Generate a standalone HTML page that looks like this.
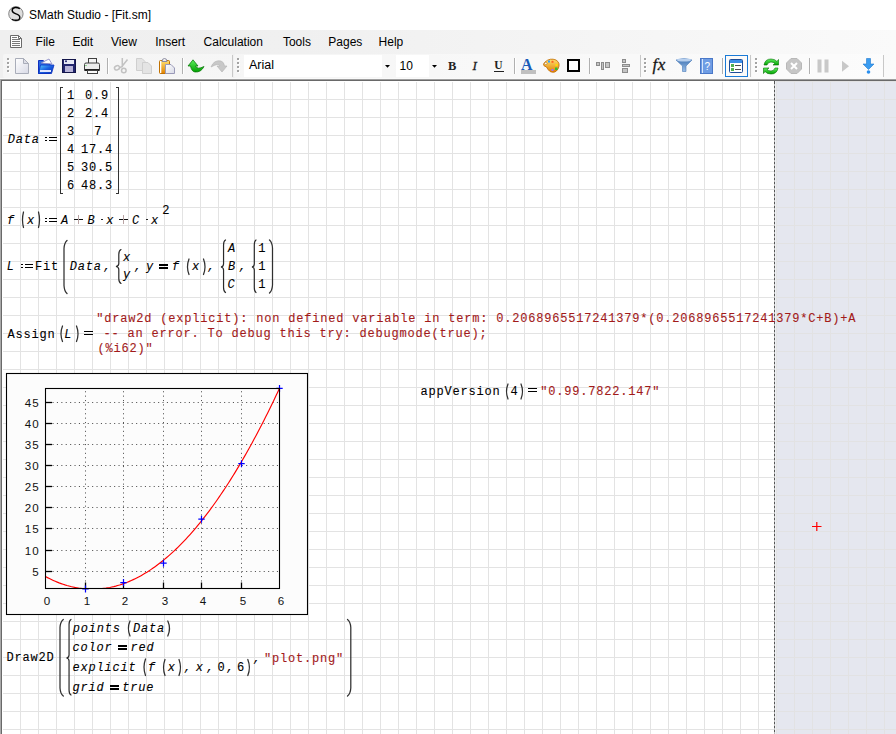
<!DOCTYPE html><html><head><meta charset="utf-8"><style>
*{margin:0;padding:0;box-sizing:border-box}
html,body{width:896px;height:734px;overflow:hidden;background:#fff;position:relative;font-family:"Liberation Sans",sans-serif}
div,span,svg{position:absolute}
.mi{font-size:12px;color:#000;line-height:14px;white-space:pre}
.m{font-family:"Liberation Mono",monospace;font-size:12px;letter-spacing:0.8px;white-space:pre;line-height:15px;color:#000;-webkit-text-stroke:0.1px}
.i{font-style:italic}
.red{color:#b3191e}
</style></head><body>
<div style="left:0;top:0;width:896px;height:30px;background:#fff"></div>
<div class="mi" style="left:29px;top:8px;font-size:12px">SMath Studio - [Fit.sm]</div>
<svg style="left:0;top:0" width="40" height="30" viewBox="0 0 40 30"><circle cx="15.9" cy="13.8" r="7.2" fill="#dedede" stroke="#7a7a7a" stroke-width="0.9"/><path d="M19.8 8.8 Q18 7.4 15.2 7.5 Q12 7.8 12.2 10.6 Q12.5 12.8 16 13.8 Q19.8 14.8 19.8 17.4 Q19.7 20.3 15.8 20.3 Q13.2 20.3 12 19.3" fill="none" stroke="#000" stroke-width="1.4"/></svg>
<div style="left:0;top:30px;width:896px;height:23px;background:linear-gradient(to right,#efefef 0,#f0f0f0 300px,#fafafa 896px)"></div>
<div class="mi" style="left:35.6px;top:35px">File</div>
<div class="mi" style="left:72.4px;top:35px">Edit</div>
<div class="mi" style="left:111px;top:35px">View</div>
<div class="mi" style="left:155.2px;top:35px">Insert</div>
<div class="mi" style="left:203.6px;top:35px">Calculation</div>
<div class="mi" style="left:282.9px;top:35px">Tools</div>
<div class="mi" style="left:328.3px;top:35px">Pages</div>
<div class="mi" style="left:378.6px;top:35px">Help</div>
<svg style="left:0;top:30px" width="30" height="23" viewBox="0 0 30 23"><path d="M10.5 5.5 H18.5 L21.5 8.5 V17.5 H10.5 Z" fill="#fff" stroke="#6a6a6a" stroke-width="1"/><path d="M18.5 5.5 V8.5 H21.5" fill="none" stroke="#6a6a6a"/><path d="M12 7.5 H17 M12 9.5 H20 M12 11.5 H20 M12 13.5 H20 M12 15.5 H20" stroke="#7a7a7a" stroke-width="1"/></svg>
<div style="left:0;top:53px;width:896px;height:26px;background:linear-gradient(to right,#efefef 0,#f0f0f0 300px,#fafafa 896px)"></div>
<svg style="left:0;top:0" width="896" height="80" viewBox="0 0 896 80"><defs><linearGradient id="pg" x1="0" y1="0" x2="1" y2="1"><stop offset="0" stop-color="#ffffff"/><stop offset="1" stop-color="#d8dae6"/></linearGradient><linearGradient id="fold" x1="0" y1="0" x2="1" y2="1"><stop offset="0" stop-color="#5ad0ff"/><stop offset="0.5" stop-color="#1a5fe0"/><stop offset="1" stop-color="#0a2fb0"/></linearGradient><linearGradient id="grn" x1="0" y1="0" x2="0" y2="1"><stop offset="0" stop-color="#60f060"/><stop offset="1" stop-color="#00a000"/></linearGradient><linearGradient id="org" x1="0" y1="0" x2="0" y2="1"><stop offset="0" stop-color="#ffe070"/><stop offset="1" stop-color="#e08000"/></linearGradient><linearGradient id="fun" x1="0" y1="0" x2="0" y2="1"><stop offset="0" stop-color="#3b6fb0"/><stop offset="1" stop-color="#9cc0e8"/></linearGradient></defs><rect x="3" y="54" width="230" height="24" rx="2" fill="#ffffff" fill-opacity="0.4"/><line x1="232.5" y1="55" x2="232.5" y2="77" stroke="#c8c8c8"/><rect x="234" y="54" width="407" height="24" rx="2" fill="#ffffff" fill-opacity="0.4"/><line x1="640.5" y1="55" x2="640.5" y2="77" stroke="#c8c8c8"/><rect x="641" y="54" width="110" height="24" rx="2" fill="#ffffff" fill-opacity="0.4"/><line x1="750.5" y1="55" x2="750.5" y2="77" stroke="#c8c8c8"/><rect x="752" y="54" width="132" height="24" rx="2" fill="#ffffff" fill-opacity="0.4"/><line x1="883.5" y1="55" x2="883.5" y2="77" stroke="#c8c8c8"/><rect x="8" y="59" width="2" height="2" fill="#fff"/><rect x="7" y="58" width="2" height="2" fill="#a3a3a3"/><rect x="8" y="63" width="2" height="2" fill="#fff"/><rect x="7" y="62" width="2" height="2" fill="#a3a3a3"/><rect x="8" y="67" width="2" height="2" fill="#fff"/><rect x="7" y="66" width="2" height="2" fill="#a3a3a3"/><rect x="8" y="71" width="2" height="2" fill="#fff"/><rect x="7" y="70" width="2" height="2" fill="#a3a3a3"/><rect x="238" y="59" width="2" height="2" fill="#fff"/><rect x="237" y="58" width="2" height="2" fill="#a3a3a3"/><rect x="238" y="63" width="2" height="2" fill="#fff"/><rect x="237" y="62" width="2" height="2" fill="#a3a3a3"/><rect x="238" y="67" width="2" height="2" fill="#fff"/><rect x="237" y="66" width="2" height="2" fill="#a3a3a3"/><rect x="238" y="71" width="2" height="2" fill="#fff"/><rect x="237" y="70" width="2" height="2" fill="#a3a3a3"/><rect x="645" y="59" width="2" height="2" fill="#fff"/><rect x="644" y="58" width="2" height="2" fill="#a3a3a3"/><rect x="645" y="63" width="2" height="2" fill="#fff"/><rect x="644" y="62" width="2" height="2" fill="#a3a3a3"/><rect x="645" y="67" width="2" height="2" fill="#fff"/><rect x="644" y="66" width="2" height="2" fill="#a3a3a3"/><rect x="645" y="71" width="2" height="2" fill="#fff"/><rect x="644" y="70" width="2" height="2" fill="#a3a3a3"/><rect x="756" y="59" width="2" height="2" fill="#fff"/><rect x="755" y="58" width="2" height="2" fill="#a3a3a3"/><rect x="756" y="63" width="2" height="2" fill="#fff"/><rect x="755" y="62" width="2" height="2" fill="#a3a3a3"/><rect x="756" y="67" width="2" height="2" fill="#fff"/><rect x="755" y="66" width="2" height="2" fill="#a3a3a3"/><rect x="756" y="71" width="2" height="2" fill="#fff"/><rect x="755" y="70" width="2" height="2" fill="#a3a3a3"/><path d="M15.5 58.5 H23.5 L28.5 63.5 V73.5 H15.5 Z" fill="url(#pg)" stroke="#a9adb9"/><path d="M23.5 58.5 L23.5 63.5 H28.5 Z" fill="#dcdde6" stroke="#a9adb9"/><path d="M38.5 60.5 H43 L45 62 H50 V73.5 H38.5 Z" fill="#2a6ae0" stroke="#1030c0"/><path d="M41 63 L49 59 L52 64 Z" fill="#fff" stroke="#8080c0" stroke-width="0.8"/><path d="M40.5 65 H54 L51.5 73.5 H38.5 Z" fill="url(#fold)" stroke="#0a30c0" stroke-width="0.8"/><rect x="40" y="70" width="11" height="2" fill="#dfe6ff"/><rect x="62.5" y="59.5" width="13" height="13" fill="#23266e" stroke="#14164a"/><rect x="64" y="60" width="10" height="4" fill="#e8eaf6"/><circle cx="66" cy="61.3" r="1" fill="#23266e"/><rect x="65" y="66" width="8" height="6" fill="#b8b4d8"/><rect x="88.5" y="58.5" width="8" height="5" fill="#f4f4f4" stroke="#404040"/><path d="M84.5 64.5 Q84.5 63 86 63 H98 Q99.5 63 99.5 64.5 V70.5 H84.5 Z" fill="#ececec" stroke="#404040"/><rect x="85" y="69" width="14" height="2" fill="#202020"/><rect x="87.5" y="70.5" width="10" height="3" fill="#fafafa" stroke="#404040"/><rect x="85.5" y="65" width="1" height="1" fill="#30c030"/><rect x="107" y="58" width="1" height="16" fill="#b0b0b0"/><rect x="108" y="58" width="1" height="16" fill="#fff"/><g stroke="#c2c2c2" stroke-width="1.5" fill="none"><ellipse cx="117" cy="67.8" rx="2.6" ry="2" transform="rotate(-25 117 67.8)"/><circle cx="123.8" cy="70.5" r="2.3"/><path d="M122.3 58 V66.5 L120 67.5 M127.5 59.5 L121.5 67"/></g><path d="M136.5 58.5 H142 L145 61.5 V70.5 H136.5 Z" fill="#e4e4e4" stroke="#cfcfcf"/><path d="M142.5 62.5 H148 L151.5 66 V73.5 H142.5 Z" fill="#e4e4e4" stroke="#cfcfcf"/><rect x="159.5" y="60.5" width="10" height="13" rx="1" fill="url(#org)" stroke="#c07000"/><rect x="160" y="61" width="1.3" height="12" fill="#fff"/><path d="M162 61.5 Q162 58.5 164.5 58.5 Q167 58.5 167 61.5 Z" fill="#f0f0f0" stroke="#8a8aa0"/><path d="M165.5 64.5 H171 L174.5 68 V73.5 H165.5 Z" fill="url(#pg)" stroke="#9a9ab8"/><rect x="182" y="58" width="1" height="16" fill="#b0b0b0"/><rect x="183" y="58" width="1" height="16" fill="#fff"/><path d="M188 66 L193 59.8 L198 66 H195.5 Q197 70 204 66.5 Q201 72.5 195 72 Q191.5 71.5 190.5 66 Z" fill="url(#grn)" stroke="#007000" stroke-width="0.7"/><path d="M211 67 Q214 59.5 221 61 Q224 62 224.5 66 H227 L222 72 L217 66 H220 Q219 62.5 211 67 Z" fill="#c8c8c8" stroke="#b8b8b8" stroke-width="0.7"/><rect x="244" y="55" width="150" height="22" fill="#fff"/><rect x="382" y="55" width="12" height="22" fill="#f7f7f7"/><path d="M385 65 H390 L387.5 67.8 Z" fill="#000"/><rect x="396" y="55" width="45" height="22" fill="#fff"/><rect x="429" y="55" width="12" height="22" fill="#f7f7f7"/><path d="M432 65 H437 L434.5 67.8 Z" fill="#000"/><text x="249" y="69" font-family="Liberation Sans" font-size="12.5" fill="#000">Arial</text><text x="399.5" y="70" font-family="Liberation Sans" font-size="12" fill="#000">10</text><text x="448" y="70" font-family="Liberation Serif" font-weight="bold" font-size="12.5" fill="#222">B</text><text x="472.5" y="70" font-family="Liberation Serif" font-style="italic" font-size="13" fill="#222" stroke="#222" stroke-width="0.3">I</text><text x="494.3" y="69" font-family="Liberation Serif" font-weight="bold" font-size="11.5" fill="#222">U</text><rect x="494" y="71" width="10" height="1" fill="#222"/><rect x="514" y="58" width="1" height="16" fill="#b0b0b0"/><rect x="515" y="58" width="1" height="16" fill="#fff"/><text x="521" y="70" font-family="Liberation Serif" font-weight="bold" font-size="16" fill="#1a5cb8">A</text><rect x="521" y="70" width="15" height="4" fill="#c0c0c0"/><path d="M545 62 Q550 57.5 556 60 Q561 63 558 69 Q555 74 550 71.5 Q548 70 546.5 67 Q543 66 543.5 64 Z" fill="url(#org)" stroke="#c06a00" stroke-width="0.8"/><circle cx="545.8" cy="63.5" r="1.2" fill="#fff" stroke="#a06000" stroke-width="0.5"/><rect x="548" y="60.5" width="2" height="2" fill="#30a0ff"/><rect x="551.5" y="60.8" width="2" height="2" fill="#ff6020"/><rect x="555.5" y="64" width="2" height="2" fill="#ffe000"/><rect x="555" y="67.5" width="2.5" height="2.5" fill="#30c030"/><rect x="551.5" y="69" width="2" height="2" fill="#a070ff"/><rect x="568" y="60" width="11" height="11" fill="#fff" stroke="#000" stroke-width="2"/><rect x="589" y="58" width="1" height="16" fill="#b0b0b0"/><rect x="590" y="58" width="1" height="16" fill="#fff"/><g fill="#c4c4c4" stroke="#8c8c8c" stroke-width="1"><rect x="596.5" y="62.5" width="3" height="3"/><rect x="601.5" y="62.5" width="2" height="7"/><rect x="605.5" y="62.5" width="4" height="5"/><rect x="622.5" y="59.5" width="3" height="3"/><rect x="622.5" y="64.5" width="7" height="2"/><rect x="622.5" y="68.5" width="5" height="4"/></g><text x="652.5" y="70" font-family="Liberation Serif" font-style="italic" font-size="17" letter-spacing="0.6" fill="#151515" stroke="#151515" stroke-width="0.3">fx</text><path d="M676 60 Q684 57 692 60 L686 66 V71.5 H682.5 V66 Z" fill="url(#fun)" stroke="#4a7ab8" stroke-width="0.6"/><ellipse cx="684" cy="60" rx="7.5" ry="1.6" fill="#b8d0ee"/><rect x="700.5" y="58.5" width="12" height="15" fill="#6f9de4" stroke="#4a78c8"/><rect x="702" y="59" width="1" height="14" fill="#d8e6fa"/><text x="704.5" y="70" font-family="Liberation Sans" font-size="10" fill="#fff">?</text><rect x="722" y="58" width="1" height="16" fill="#b0b0b0"/><rect x="723" y="58" width="1" height="16" fill="#fff"/><rect x="725.5" y="55.5" width="22" height="21" fill="#fbfaf9" stroke="#1a7ad6"/><rect x="729.5" y="59.5" width="13" height="13" rx="1" fill="#fff" stroke="#1c4d98"/><rect x="730" y="60" width="12" height="3" fill="#3c8ee8"/><rect x="731" y="64" width="3" height="3" fill="#50b050"/><rect x="731" y="68" width="3" height="3" fill="#50b050"/><rect x="735" y="65" width="6" height="1" fill="#505050"/><rect x="735" y="69" width="6" height="1" fill="#505050"/><path d="M764 65 Q765 59 771 59 Q775 59 777 61.5 L778.5 59.5 V65 H773 L775 63.5 Q773.5 62 771 62 Q768 62 767 65 Z" fill="url(#grn)" stroke="#007000" stroke-width="0.6"/><path d="M778 68 Q777 74 771 74 Q767 74 765 71.5 L763.5 73.5 V68 H769 L767 69.5 Q768.5 71 771 71 Q774 71 775 68 Z" fill="url(#grn)" stroke="#007000" stroke-width="0.6"/><path d="M791 58.5 H797 L801.5 63 V69 L797 73.5 H791 L786.5 69 V63 Z" fill="#c6c6c6" stroke="#b8b8b8"/><path d="M791 63 L797 69 M797 63 L791 69" stroke="#fff" stroke-width="2"/><rect x="809" y="58" width="1" height="16" fill="#b0b0b0"/><rect x="810" y="58" width="1" height="16" fill="#fff"/><rect x="817.5" y="59.5" width="4" height="13" fill="#c8c8c8"/><rect x="824.5" y="59.5" width="4" height="13" fill="#c8c8c8"/><path d="M842 60.8 L849 66.2 L842 71.7 Z" fill="#c8c8c8"/><path d="M866.5 58.5 H870.5 V64 H874 L868.5 69.5 L863 64 H866.5 Z" fill="#3a9cf0" stroke="#1e78d0" stroke-width="0.6"/><circle cx="868.5" cy="72" r="1.8" fill="#2a90f0"/></svg>
<div style="left:0;top:78px;width:896px;height:1px;background:#fafafa"></div>
<div style="left:0;top:79px;width:896px;height:1px;background:#a0a0a0"></div>
<div style="left:0;top:80px;width:896px;height:1px;background:#696969"></div>
<div style="left:0;top:79px;width:1px;height:655px;background:#a9a9a9"></div>
<div style="left:1px;top:80px;width:1px;height:654px;background:#696969"></div>
<div style="left:2px;top:81px;width:894px;height:653px;background:#fff"></div>
<div style="left:3px;top:82px;width:771px;height:652px;background-image:linear-gradient(to right,#e3e3e3 1px,transparent 1px),linear-gradient(to bottom,#e3e3e3 1px,transparent 1px);background-size:18px 18px;background-position:17px 17px"></div>
<div style="left:775px;top:81px;width:121px;height:653px;background-color:#e5e7ef;background-image:linear-gradient(to right,#e2e2e3 1px,transparent 1px),linear-gradient(to bottom,#e2e2e3 1px,transparent 1px);background-size:18px 18px;background-position:1px 18px"></div>
<div style="left:775px;top:81px;width:1px;height:653px;background:#eef0f4"></div>
<div style="left:774px;top:81px;width:1px;height:653px;background:repeating-linear-gradient(to bottom,#555 0,#555 2px,#bbb 2px,#bbb 4px);background-position:0 1px"></div>
<svg style="left:0;top:0" width="896" height="734" viewBox="0 0 896 734"><rect x="6.5" y="373.5" width="301" height="241" fill="#fcfcfc" stroke="#000" stroke-width="1.1"/><line x1="85.5" y1="581.5" x2="85.5" y2="389.5" stroke="#555" stroke-width="1" stroke-dasharray="1.1 3.3"/><line x1="123.5" y1="581.5" x2="123.5" y2="389.5" stroke="#555" stroke-width="1" stroke-dasharray="1.1 3.3"/><line x1="163.5" y1="581.5" x2="163.5" y2="389.5" stroke="#555" stroke-width="1" stroke-dasharray="1.1 3.3"/><line x1="201.5" y1="581.5" x2="201.5" y2="389.5" stroke="#555" stroke-width="1" stroke-dasharray="1.1 3.3"/><line x1="241.5" y1="581.5" x2="241.5" y2="389.5" stroke="#555" stroke-width="1" stroke-dasharray="1.1 3.3"/><line x1="52.5" y1="402.5" x2="278.5" y2="402.5" stroke="#555" stroke-width="1" stroke-dasharray="1.1 3.3"/><line x1="52.5" y1="423.5" x2="278.5" y2="423.5" stroke="#555" stroke-width="1" stroke-dasharray="1.1 3.3"/><line x1="52.5" y1="444.5" x2="278.5" y2="444.5" stroke="#555" stroke-width="1" stroke-dasharray="1.1 3.3"/><line x1="52.5" y1="465.5" x2="278.5" y2="465.5" stroke="#555" stroke-width="1" stroke-dasharray="1.1 3.3"/><line x1="52.5" y1="486.5" x2="278.5" y2="486.5" stroke="#555" stroke-width="1" stroke-dasharray="1.1 3.3"/><line x1="52.5" y1="507.5" x2="278.5" y2="507.5" stroke="#555" stroke-width="1" stroke-dasharray="1.1 3.3"/><line x1="52.5" y1="528.5" x2="278.5" y2="528.5" stroke="#555" stroke-width="1" stroke-dasharray="1.1 3.3"/><line x1="52.5" y1="550.5" x2="278.5" y2="550.5" stroke="#555" stroke-width="1" stroke-dasharray="1.1 3.3"/><line x1="52.5" y1="571.5" x2="278.5" y2="571.5" stroke="#555" stroke-width="1" stroke-dasharray="1.1 3.3"/><line x1="85.5" y1="588.5" x2="85.5" y2="582.5" stroke="#000" stroke-width="1.3"/><line x1="123.5" y1="588.5" x2="123.5" y2="582.5" stroke="#000" stroke-width="1.3"/><line x1="163.5" y1="588.5" x2="163.5" y2="582.5" stroke="#000" stroke-width="1.3"/><line x1="201.5" y1="588.5" x2="201.5" y2="582.5" stroke="#000" stroke-width="1.3"/><line x1="241.5" y1="588.5" x2="241.5" y2="582.5" stroke="#000" stroke-width="1.3"/><line x1="45.5" y1="402.5" x2="52.0" y2="402.5" stroke="#000" stroke-width="1.3"/><line x1="45.5" y1="423.5" x2="52.0" y2="423.5" stroke="#000" stroke-width="1.3"/><line x1="45.5" y1="444.5" x2="52.0" y2="444.5" stroke="#000" stroke-width="1.3"/><line x1="45.5" y1="465.5" x2="52.0" y2="465.5" stroke="#000" stroke-width="1.3"/><line x1="45.5" y1="486.5" x2="52.0" y2="486.5" stroke="#000" stroke-width="1.3"/><line x1="45.5" y1="507.5" x2="52.0" y2="507.5" stroke="#000" stroke-width="1.3"/><line x1="45.5" y1="528.5" x2="52.0" y2="528.5" stroke="#000" stroke-width="1.3"/><line x1="45.5" y1="550.5" x2="52.0" y2="550.5" stroke="#000" stroke-width="1.3"/><line x1="45.5" y1="571.5" x2="52.0" y2="571.5" stroke="#000" stroke-width="1.3"/><clipPath id="pc"><rect x="45" y="388" width="235" height="200.5"/></clipPath><polyline clip-path="url(#pc)" points="45.50,576.59 47.45,577.62 49.40,578.60 51.35,579.54 53.30,580.44 55.25,581.29 57.20,582.10 59.15,582.87 61.10,583.59 63.05,584.27 65.00,584.91 66.95,585.50 68.90,586.04 70.85,586.55 72.80,587.01 74.75,587.43 76.70,587.80 78.65,588.13 80.60,588.41 82.55,588.66 84.50,588.86 86.45,589.01 88.40,589.12 90.35,589.19 92.30,589.21 94.25,589.19 96.20,589.13 98.15,589.02 100.10,588.87 102.05,588.68 104.00,588.44 105.95,588.16 107.90,587.83 109.85,587.47 111.80,587.05 113.75,586.60 115.70,586.10 117.65,585.55 119.60,584.97 121.55,584.34 123.50,583.66 125.45,582.94 127.40,582.18 129.35,581.38 131.30,580.53 133.25,579.64 135.20,578.70 137.15,577.72 139.10,576.70 141.05,575.63 143.00,574.52 144.95,573.36 146.90,572.17 148.85,570.92 150.80,569.64 152.75,568.31 154.70,566.94 156.65,565.52 158.60,564.06 160.55,562.56 162.50,561.01 164.45,559.42 166.40,557.79 168.35,556.11 170.30,554.39 172.25,552.62 174.20,550.81 176.15,548.96 178.10,547.06 180.05,545.12 182.00,543.14 183.95,541.11 185.90,539.04 187.85,536.93 189.80,534.77 191.75,532.57 193.70,530.32 195.65,528.03 197.60,525.70 199.55,523.32 201.50,520.90 203.45,518.44 205.40,515.93 207.35,513.38 209.30,510.79 211.25,508.15 213.20,505.47 215.15,502.74 217.10,499.97 219.05,497.16 221.00,494.30 222.95,491.40 224.90,488.46 226.85,485.47 228.80,482.44 230.75,479.37 232.70,476.25 234.65,473.09 236.60,469.88 238.55,466.63 240.50,463.34 242.45,460.00 244.40,456.62 246.35,453.20 248.30,449.73 250.25,446.22 252.20,442.67 254.15,439.07 256.10,435.43 258.05,431.74 260.00,428.01 261.95,424.24 263.90,420.42 265.85,416.56 267.80,412.66 269.75,408.71 271.70,404.72 273.65,400.68 275.60,396.61 277.55,392.48 279.50,388.32" fill="none" stroke="#ff0000" stroke-width="1.15"/><path d="M82.3 589.0 H88.7 M85.5 585.5 V592.5" stroke="#0000ff" stroke-width="1.2"/><path d="M120.3 582.6 H126.7 M123.5 579.1 V586.1" stroke="#0000ff" stroke-width="1.2"/><path d="M160.3 563.2 H166.7 M163.5 559.7 V566.7" stroke="#0000ff" stroke-width="1.2"/><path d="M198.3 519.2 H204.7 M201.5 515.7 V522.7" stroke="#0000ff" stroke-width="1.2"/><path d="M238.3 463.7 H244.7 M241.5 460.2 V467.2" stroke="#0000ff" stroke-width="1.2"/><path d="M276.3 388.4 H282.7 M279.5 384.9 V391.9" stroke="#0000ff" stroke-width="1.2"/><rect x="45.5" y="388.5" width="234.0" height="200.0" fill="none" stroke="#000" stroke-width="1.1"/><text x="39.6" y="406.6" text-anchor="end" font-family="Liberation Sans" font-size="11.6" letter-spacing="1" fill="#111">45</text><text x="39.6" y="427.6" text-anchor="end" font-family="Liberation Sans" font-size="11.6" letter-spacing="1" fill="#111">40</text><text x="39.6" y="448.6" text-anchor="end" font-family="Liberation Sans" font-size="11.6" letter-spacing="1" fill="#111">35</text><text x="39.6" y="469.6" text-anchor="end" font-family="Liberation Sans" font-size="11.6" letter-spacing="1" fill="#111">30</text><text x="39.6" y="490.6" text-anchor="end" font-family="Liberation Sans" font-size="11.6" letter-spacing="1" fill="#111">25</text><text x="39.6" y="511.6" text-anchor="end" font-family="Liberation Sans" font-size="11.6" letter-spacing="1" fill="#111">20</text><text x="39.6" y="532.6" text-anchor="end" font-family="Liberation Sans" font-size="11.6" letter-spacing="1" fill="#111">15</text><text x="39.6" y="554.6" text-anchor="end" font-family="Liberation Sans" font-size="11.6" letter-spacing="1" fill="#111">10</text><text x="39.6" y="575.6" text-anchor="end" font-family="Liberation Sans" font-size="11.6" letter-spacing="1" fill="#111">5</text><text x="47.5" y="605" text-anchor="middle" font-family="Liberation Sans" font-size="11.6" letter-spacing="1" fill="#111">0</text><text x="87.5" y="605" text-anchor="middle" font-family="Liberation Sans" font-size="11.6" letter-spacing="1" fill="#111">1</text><text x="125.5" y="605" text-anchor="middle" font-family="Liberation Sans" font-size="11.6" letter-spacing="1" fill="#111">2</text><text x="165.5" y="605" text-anchor="middle" font-family="Liberation Sans" font-size="11.6" letter-spacing="1" fill="#111">3</text><text x="203.5" y="605" text-anchor="middle" font-family="Liberation Sans" font-size="11.6" letter-spacing="1" fill="#111">4</text><text x="243.5" y="605" text-anchor="middle" font-family="Liberation Sans" font-size="11.6" letter-spacing="1" fill="#111">5</text><text x="281.5" y="605" text-anchor="middle" font-family="Liberation Sans" font-size="11.6" letter-spacing="1" fill="#111">6</text></svg>
<div class="m i" style="left:7.8px;top:133px">Data</div><div style="left:45px;top:137px;width:2px;height:1px;background:#000"></div><div style="left:45px;top:140px;width:2px;height:1px;background:#000"></div><div style="left:49px;top:137px;width:8px;height:1px;background:#000"></div><div style="left:49px;top:140px;width:8px;height:1px;background:#000"></div><div style="left:60px;top:87px;width:1px;height:107px;background:#333"></div><div style="left:60px;top:87px;width:3px;height:1px;background:#333"></div><div style="left:60px;top:193px;width:3px;height:1px;background:#333"></div><div style="left:118px;top:87px;width:1px;height:107px;background:#333"></div><div style="left:116px;top:87px;width:3px;height:1px;background:#333"></div><div style="left:116px;top:193px;width:3px;height:1px;background:#333"></div><div class="m" style="left:66.9px;top:89px">1</div><div class="m" style="left:84.9px;top:89px">0.9</div><div class="m" style="left:66.9px;top:107px">2</div><div class="m" style="left:84.9px;top:107px">2.4</div><div class="m" style="left:66.9px;top:125px">3</div><div class="m" style="left:94.3px;top:125px">7</div><div class="m" style="left:66.9px;top:143px">4</div><div class="m" style="left:81px;top:143px">17.4</div><div class="m" style="left:66.9px;top:161px">5</div><div class="m" style="left:81px;top:161px">30.5</div><div class="m" style="left:66.9px;top:179px">6</div><div class="m" style="left:81px;top:179px">48.3</div><div class="m i" style="left:7px;top:214px">f</div><div class="m i" style="left:27px;top:214px">x</div><div style="left:45px;top:218px;width:2px;height:1px;background:#000"></div><div style="left:45px;top:221px;width:2px;height:1px;background:#000"></div><div style="left:49px;top:218px;width:8px;height:1px;background:#000"></div><div style="left:49px;top:221px;width:8px;height:1px;background:#000"></div><div class="m i" style="left:61px;top:214px">A</div><div style="left:74px;top:219px;width:9px;height:1px;background:#111"></div><div style="left:78px;top:215px;width:1px;height:9px;background:#b9a4a4"></div><div class="m i" style="left:87.5px;top:214px">B</div><div style="left:101px;top:219px;width:2px;height:1px;background:#222"></div><div class="m i" style="left:106.2px;top:214px">x</div><div style="left:119px;top:219px;width:9px;height:1px;background:#111"></div><div style="left:123px;top:215px;width:1px;height:9px;background:#b9a4a4"></div><div class="m i" style="left:132px;top:214px">C</div><div style="left:146px;top:219px;width:2px;height:1px;background:#222"></div><div class="m i" style="left:151px;top:214px">x</div><div class="m" style="left:162.3px;top:204px">2</div><div class="m i" style="left:6.8px;top:260px">L</div><div style="left:21px;top:264px;width:2px;height:1px;background:#000"></div><div style="left:21px;top:267px;width:2px;height:1px;background:#000"></div><div style="left:25px;top:264px;width:8px;height:1px;background:#000"></div><div style="left:25px;top:267px;width:8px;height:1px;background:#000"></div><div class="m" style="left:35px;top:260px">Fit</div><div class="m i" style="left:69.8px;top:260px">Data</div><div class="m i" style="left:103.6px;top:260px">,</div><div class="m i" style="left:123px;top:251px">x</div><div class="m i" style="left:123px;top:268px">y</div><div class="m i" style="left:134.3px;top:260px">,</div><div class="m i" style="left:146.1px;top:260px">y</div><div style="left:159px;top:264px;width:9px;height:2px;background:#000"></div><div style="left:159px;top:267px;width:9px;height:2px;background:#000"></div><div class="m i" style="left:171.9px;top:260px">f</div><div class="m i" style="left:191.9px;top:260px">x</div><div class="m i" style="left:207.6px;top:260px">,</div><div class="m i" style="left:228px;top:242px">A</div><div class="m i" style="left:228px;top:260px">B</div><div class="m i" style="left:227.5px;top:278px">C</div><div class="m i" style="left:239px;top:260px">,</div><div class="m" style="left:258.2px;top:242px">1</div><div class="m" style="left:258.2px;top:260px">1</div><div class="m" style="left:258.2px;top:278px">1</div><div class="m" style="left:7.4px;top:328px">Assign</div><div class="m i" style="left:64.2px;top:328px">L</div><div style="left:84px;top:331px;width:9px;height:1px;background:#000"></div><div style="left:84px;top:334px;width:9px;height:1px;background:#000"></div><div class="m" style="left:96.25px;top:312px;color:#a21a1a">"draw2d (explicit): non defined variable in term: 0.2068965517241379*(0.2068965517241379*C+B)+A</div><div class="m" style="left:95.4px;top:327px;color:#a21a1a"> -- an error. To debug this try: debugmode(true);</div><div class="m" style="left:97.6px;top:342px;color:#a21a1a">(%i62)"</div><div class="m" style="left:420.5px;top:385px">appVersion</div><div class="m" style="left:510.5px;top:385px">4</div><div style="left:528px;top:388px;width:9px;height:1px;background:#000"></div><div style="left:528px;top:391px;width:9px;height:1px;background:#000"></div><div class="m" style="left:540.2px;top:385px;color:#a21a1a">"0.99.7822.147"</div><div class="m" style="left:6.6px;top:651px">Draw2D</div><div class="m i" style="left:72.7px;top:622px">points</div><div class="m i" style="left:133px;top:622px">Data</div><div class="m i" style="left:72.4px;top:641px">color</div><div style="left:118px;top:645px;width:9px;height:2px;background:#000"></div><div style="left:118px;top:648px;width:9px;height:2px;background:#000"></div><div class="m i" style="left:130.6px;top:641px">red</div><div class="m i" style="left:72.4px;top:661px">explicit</div><div class="m i" style="left:148px;top:661px">f</div><div class="m i" style="left:167.8px;top:661px">x</div><div class="m i" style="left:184.1px;top:661px">,</div><div class="m i" style="left:195.7px;top:661px">x</div><div class="m i" style="left:206.4px;top:661px">,</div><div class="m" style="left:217.6px;top:661px">0</div><div class="m i" style="left:226.5px;top:661px">,</div><div class="m" style="left:237px;top:661px">6</div><div class="m i" style="left:253.3px;top:652px">,</div><div class="m i" style="left:72.4px;top:681px">grid</div><div style="left:110px;top:685px;width:9px;height:2px;background:#000"></div><div style="left:110px;top:688px;width:9px;height:2px;background:#000"></div><div class="m i" style="left:122.3px;top:681px">true</div><div class="m" style="left:264px;top:652px;color:#a21a1a">"plot.png"</div><svg style="left:0;top:0" width="896" height="734" viewBox="0 0 896 734"><path d="M23.5 212 Q21.5 219.75 23.5 227.5" stroke="#303030" stroke-width="1.25" fill="none" stroke-linecap="round"/><path d="M38.5 212 Q40.5 219.75 38.5 227.5" stroke="#303030" stroke-width="1.25" fill="none" stroke-linecap="round"/><path d="M67 240.5 Q64.3 242.9 64 248.5 L64 285.5 Q64.3 291.1 67 293.5" stroke="#303030" stroke-width="1.25" fill="none" stroke-linecap="round"/><path d="M121 249.5 Q118.8 250.5 118.8 254.5 L118.8 263.5 Q118.8 266.0 116 266.5 Q118.8 267.0 118.8 269.5 L118.8 278.5 Q118.8 282.5 121 283.5" stroke="#2a2a2a" stroke-width="1.2" fill="none" stroke-linecap="round"/><path d="M189 259 Q186 266.75 189 274.5" stroke="#303030" stroke-width="1.25" fill="none" stroke-linecap="round"/><path d="M203.5 259 Q206.5 266.75 203.5 274.5" stroke="#303030" stroke-width="1.25" fill="none" stroke-linecap="round"/><path d="M225.5 240 Q223.55 241 223.55 245 L223.55 264 Q223.55 266.5 221 267 Q223.55 267.5 223.55 270 L223.55 287.5 Q223.55 291.5 225.5 292.5" stroke="#2a2a2a" stroke-width="1.2" fill="none" stroke-linecap="round"/><path d="M256 240 Q254.3 241 254.3 245 L254.3 264 Q254.3 266.5 252 267 Q254.3 267.5 254.3 270 L254.3 287.5 Q254.3 291.5 256 292.5" stroke="#2a2a2a" stroke-width="1.2" fill="none" stroke-linecap="round"/><path d="M269.5 240 Q272.2 242.4 272.5 248 L272.5 285 Q272.2 290.6 269.5 293" stroke="#303030" stroke-width="1.25" fill="none" stroke-linecap="round"/><path d="M62.5 326 Q59.5 333.75 62.5 341.5" stroke="#303030" stroke-width="1.25" fill="none" stroke-linecap="round"/><path d="M76.5 326 Q79.5 333.75 76.5 341.5" stroke="#303030" stroke-width="1.25" fill="none" stroke-linecap="round"/><path d="M508 384 Q505 391.5 508 399" stroke="#303030" stroke-width="1.25" fill="none" stroke-linecap="round"/><path d="M521 384 Q524 391.5 521 399" stroke="#303030" stroke-width="1.25" fill="none" stroke-linecap="round"/><path d="M63.3 619.5 Q60.3 621.9 60 627.5 L60 688 Q60.3 693.6 63.3 696" stroke="#303030" stroke-width="1.25" fill="none" stroke-linecap="round"/><path d="M71 619.5 Q69.05 620.5 69.05 624.5 L69.05 655 Q69.05 657.5 66.5 658 Q69.05 658.5 69.05 661 L69.05 690 Q69.05 694 71 695" stroke="#2a2a2a" stroke-width="1.2" fill="none" stroke-linecap="round"/><path d="M130 621 Q126.8 628.5 130 636" stroke="#303030" stroke-width="1.25" fill="none" stroke-linecap="round"/><path d="M167.8 621 Q171.2 628.5 167.8 636" stroke="#303030" stroke-width="1.25" fill="none" stroke-linecap="round"/><path d="M145.5 659 Q142.5 667.25 145.5 675.5" stroke="#303030" stroke-width="1.25" fill="none" stroke-linecap="round"/><path d="M165 659.5 Q162 667.5 165 675.5" stroke="#303030" stroke-width="1.25" fill="none" stroke-linecap="round"/><path d="M179 659.5 Q182 667.5 179 675.5" stroke="#303030" stroke-width="1.25" fill="none" stroke-linecap="round"/><path d="M247.8 659.5 Q251 667.5 247.8 675.5" stroke="#303030" stroke-width="1.25" fill="none" stroke-linecap="round"/><path d="M347.5 619.5 Q350.5 621.9 350.8 627.5 L350.8 688 Q350.5 693.6 347.5 696" stroke="#303030" stroke-width="1.25" fill="none" stroke-linecap="round"/><path d="M812 526.5 H821.5 M816.8 522 V531" stroke="#f00" stroke-width="1.2"/></svg>
</body></html>
